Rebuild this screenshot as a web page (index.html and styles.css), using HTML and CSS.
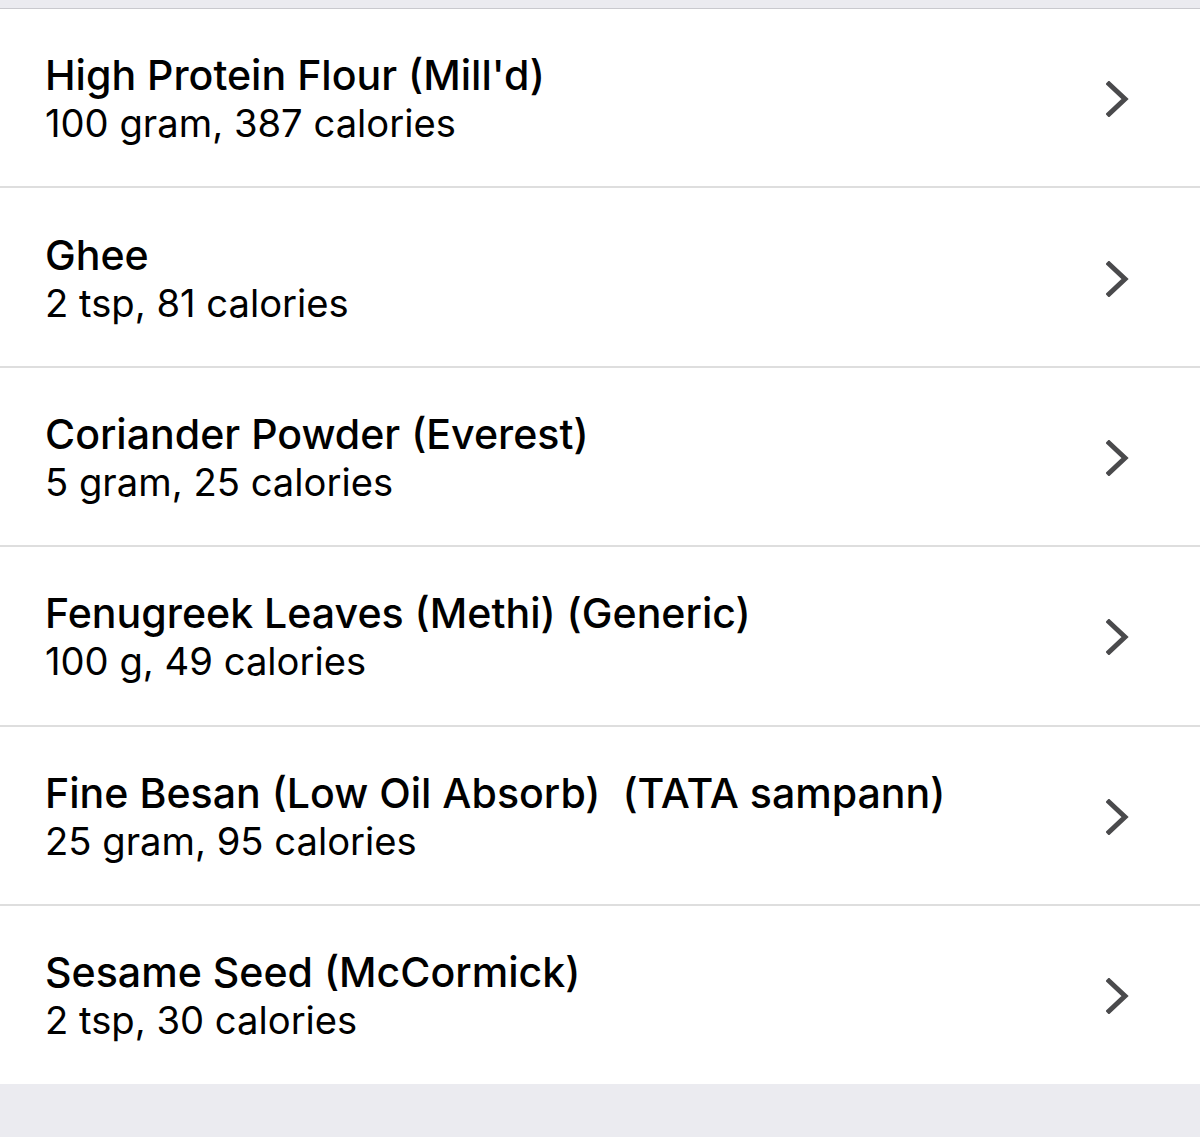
FILE: index.html
```html
<!DOCTYPE html>
<html>
<head>
  <title>Recipe Ingredients</title>
  <link rel="stylesheet" href="styles.css">
</head>
<body>
  <div class="top-band"></div>

  <div class="ingredient-list">
    <div class="ingredient-row">
      <div class="ingredient-info">
        <div class="ingredient-name">High Protein Flour (Mill'd)</div>
        <div class="ingredient-detail">100 gram, 387 calories</div>
      </div>
      <svg class="chevron" viewBox="0 0 24 36"><path d="M3 3 L19 18 L3 33"/></svg>
    </div>

    <div class="ingredient-row">
      <div class="ingredient-info">
        <div class="ingredient-name">Ghee</div>
        <div class="ingredient-detail">2 tsp, 81 calories</div>
      </div>
      <svg class="chevron" viewBox="0 0 24 36"><path d="M3 3 L19 18 L3 33"/></svg>
    </div>

    <div class="ingredient-row">
      <div class="ingredient-info">
        <div class="ingredient-name">Coriander Powder (Everest)</div>
        <div class="ingredient-detail">5 gram, 25 calories</div>
      </div>
      <svg class="chevron" viewBox="0 0 24 36"><path d="M3 3 L19 18 L3 33"/></svg>
    </div>

    <div class="ingredient-row">
      <div class="ingredient-info">
        <div class="ingredient-name">Fenugreek Leaves (Methi) (Generic)</div>
        <div class="ingredient-detail">100 g, 49 calories</div>
      </div>
      <svg class="chevron" viewBox="0 0 24 36"><path d="M3 3 L19 18 L3 33"/></svg>
    </div>

    <div class="ingredient-row">
      <div class="ingredient-info">
        <div class="ingredient-name">Fine Besan (Low Oil Absorb)&nbsp; (TATA sampann)</div>
        <div class="ingredient-detail">25 gram, 95 calories</div>
      </div>
      <svg class="chevron" viewBox="0 0 24 36"><path d="M3 3 L19 18 L3 33"/></svg>
    </div>

    <div class="ingredient-row">
      <div class="ingredient-info">
        <div class="ingredient-name">Sesame Seed (McCormick)</div>
        <div class="ingredient-detail">2 tsp, 30 calories</div>
      </div>
      <svg class="chevron" viewBox="0 0 24 36"><path d="M3 3 L19 18 L3 33"/></svg>
    </div>
  </div>
</body>
</html>
```

FILE: styles.css
```css
:root {
  --group-bg: #ebebf0;
  --separator: #dedede;
  --text-dark: #000;
  --chevron: #4a4a4c;
}

body {
  margin: 0;
  background-color: var(--group-bg);
  font-family: Inter, 'Noto Sans', sans-serif;
  color: var(--text-dark);
}

.top-band {
  height: 8px;
  border-bottom: 1px solid #c9c9ce;
}

.ingredient-list {
  background-color: #fff;
}

.ingredient-row {
  height: 177.4px;
  box-sizing: content-box;
  display: flex;
  align-items: center;
  padding: 0 70px 0 45px;
  border-bottom: 2px solid var(--separator);
}

.ingredient-row:last-child {
  height: 178px;
  border-bottom: none;
}

.ingredient-info {
  flex: 1;
  padding-top: 3px;
}

.ingredient-name {
  font-size: 41.1px;
  font-weight: 460;
  line-height: 48px;
}

.ingredient-detail {
  font-size: 38.2px;
  line-height: 48px;
}

.chevron {
  width: 24px;
  height: 36px;
  margin-top: 3px;
  fill: none;
  stroke: var(--chevron);
  stroke-width: 5;
  stroke-linecap: square;
}
```
